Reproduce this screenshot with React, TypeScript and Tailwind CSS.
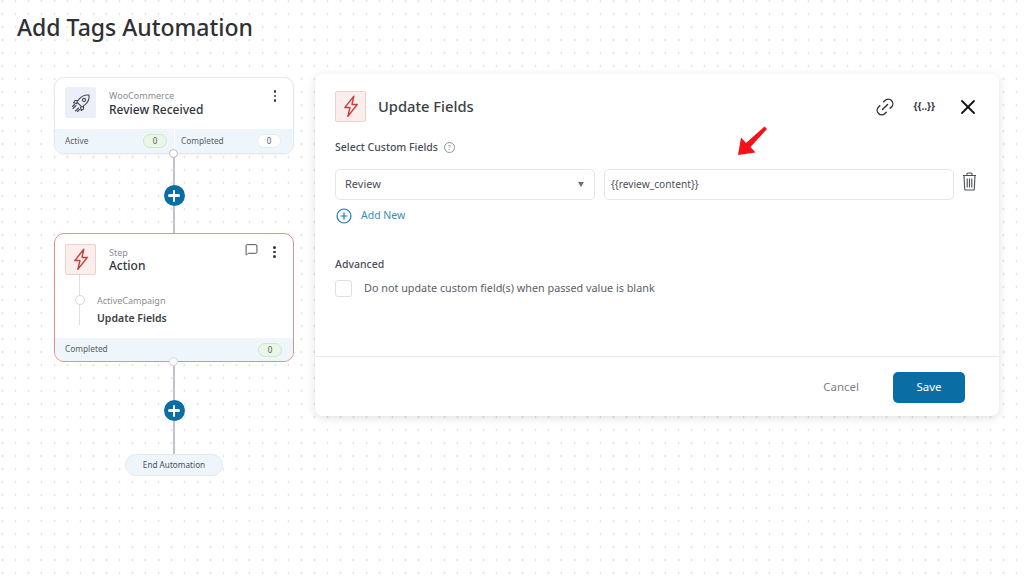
import { Link2, MessageSquare, X } from "lucide-react";

const BoltIcon = ({ size = 18 }: { size?: number }) => (
  <svg width={size} height={size * 1.25} viewBox="0 0 16 20" fill="none" stroke="#c9403c" strokeWidth="1.3" strokeLinejoin="round">
    <path d="M10.5 1 2.5 11.2h4.6L5.2 19l8.3-10.6H8.9L10.5 1Z" />
  </svg>
);

const RocketIcon = () => (
  <svg width="20" height="20" viewBox="0 0 20 20" fill="none" stroke="#4a4a55" strokeWidth="1.1" strokeLinejoin="round" strokeLinecap="round">
    <path d="M18 2c-4-.4-7.2 1-9.4 3.6L5.8 9l5.2 5.2 3.4-2.8C17 9.200 18.400 6 18 2Z" />
    <circle cx="13" cy="7" r="1.6" />
    <path d="M6.800 7.500H4L2.500 9.800l3.300.8M12.500 13.200V16l-2.300 1.500-.8-3.300" />
    <path d="M5 12.500 2 15.500M7.500 15 4.500 18M3.500 11.500 1.500 13.500M8.500 16.500 6.500 18.500" />
  </svg>
);

const Kebab = () => (
  <div className="flex flex-col gap-[2px]">
    <span className="size-[2.5px] rounded-full bg-[#33363d]" />
    <span className="size-[2.5px] rounded-full bg-[#33363d]" />
    <span className="size-[2.5px] rounded-full bg-[#33363d]" />
  </div>
);

const Count = ({ green }: { green?: boolean }) => (
  <span
    className={`flex h-[14px] w-[24px] items-center justify-center rounded-full border text-[8px] text-[#555] ${
      green ? "border-[#cfe8c8] bg-[#eaf7e6]" : "border-[#e6ecf2] bg-white"
    }`}
  >
    0
  </span>
);

const AddButton = () => (
  <div className="relative z-10 flex size-[21px] items-center justify-center rounded-full bg-[#0a6ea5]">
    <span className="absolute h-[2.5px] w-[12px] rounded bg-white" />
    <span className="absolute h-[12px] w-[2.5px] rounded bg-white" />
  </div>
);

export default function App() {
  return (
    <div
      className="relative h-[576px] w-[1024px] overflow-hidden bg-white bg-[radial-gradient(circle,#d6d8dc_0.8px,transparent_1.100px)] bg-[size:13px_13px] bg-[position:-4px_-5.500px] text-[#353a40]"
      style={{ fontFamily: '"Noto Sans", "Open Sans", sans-serif' }}
    >
      <h1 className="h-[74px] pl-[17px] pt-[9px] text-[23px] leading-[36px] font-medium text-[#2f3035]">Add Tags Automation</h1>

      <div className="flex items-start">
        {/* flow column */}
        <div className="ml-[54px] flex w-[240px] flex-col items-center pt-[3px]">
          <div className="relative w-full rounded-[10px] border border-[#e3e9f0] bg-white shadow-[0_1px_3px_rgba(0,0,0,0.05)]">
            <div className="flex h-[51px] items-start pl-[10px] pr-[17px] pt-[9px]">
              <div className="flex size-[31px] items-center justify-center rounded-[2px] bg-[#eceef8]">
                <RocketIcon />
              </div>
              <div className="ml-[13px] flex-1 pt-[3px]">
                <div className="text-[9px] leading-[12px] text-[#8a8d94]">WooCommerce</div>
                <div className="text-[12px] leading-[15px] font-medium text-[#33363b]">Review Received</div>
              </div>
              <div className="pt-[3px]">
                <Kebab />
              </div>
            </div>
            <div className="flex h-[24px] items-center rounded-b-[10px] bg-[#eef5fb] text-[8.300px] text-[#5a5f66]">
              <div className="flex h-full w-[120px] items-center justify-between border-r border-white pl-[10px] pr-[7px]">
                <span>Active</span>
                <Count green />
              </div>
              <div className="flex flex-1 items-center justify-between pl-[6px] pr-[12px]">
                <span>Completed</span>
                <Count />
              </div>
            </div>
            <span className="absolute bottom-[-5px] left-[114px] size-[9px] rounded-full border border-[#b9bcc0] bg-white" />
          </div>

          <div className="h-[31px] w-[1.500px] bg-[#bfc2c6]" />
          <AddButton />
          <div className="h-[27px] w-[1.500px] bg-[#bfc2c6]" />

          <div className="relative w-full rounded-[10px] border border-[#e0918c] bg-white">
            <div className="relative h-[104px] pl-[10px] pt-[10px]">
              <div className="relative z-10 flex size-[31px] items-center justify-center rounded-[2px] border border-[#f0d0cd] bg-[#fbeeec]">
                <BoltIcon />
              </div>
              <div className="absolute left-[23.500px] top-[41px] h-[50px] w-[1.500px] bg-[#dcdfe3]" />
              <span className="absolute left-[19.500px] top-[61px] size-[10px] rounded-full border border-[#d5d8dc] bg-white" />
              <div className="absolute left-[54px] top-[12px]">
                <div className="text-[9px] leading-[13px] text-[#8a8d94]">Step</div>
                <div className="-mt-[1px] text-[12px] leading-[15px] font-medium text-[#33363b]">Action</div>
              </div>
              <div className="absolute left-[42px] top-[60px]">
                <div className="text-[9px] leading-[13px] text-[#8a8d94]">ActiveCampaign</div>
                <div className="mt-[4px] text-[10.500px] leading-[15px] font-semibold text-[#3c3f45]">Update Fields</div>
              </div>
              <MessageSquare className="absolute left-[190px] top-[9px] size-[13px] text-[#33363d]" strokeWidth={1.6} />
              <div className="absolute left-[218px] top-[12px]">
                <Kebab />
              </div>
            </div>
            <div className="flex h-[23px] items-center justify-between rounded-b-[10px] bg-[#eef5fb] pl-[10px] pr-[11px] text-[8.300px] text-[#5a5f66]">
              <span>Completed</span>
              <Count green />
            </div>
            <span className="absolute bottom-[-5px] left-[114px] size-[9px] rounded-full border border-[#d5d8dc] bg-white" />
          </div>

          <div className="h-[38px] w-[1.500px] bg-[#bfc2c6]" />
          <AddButton />
          <div className="h-[33px] w-[1.500px] bg-[#bfc2c6]" />
          <div className="flex h-[22px] w-[98px] items-center justify-center rounded-full border border-[#e3e9f0] bg-[#eef5fb] text-[8.200px] text-[#4c5056]">
            End Automation
          </div>
        </div>

        {/* update fields panel */}
        <div className="ml-[21px] flex h-[342px] w-[684px] flex-col rounded-[8px] bg-white shadow-[0_2px_10px_rgba(0,0,0,0.13)]">
          <div className="flex items-center pl-[20px] pr-[19px] pt-[17px]">
            <div className="flex size-[31px] items-center justify-center rounded-[2px] border border-[#f0d0cd] bg-[#fbeeec]">
              <BoltIcon />
            </div>
            <div className="ml-[12px] flex-1 text-[14.700px] font-medium text-[#3c3f45]">Update Fields</div>
            <Link2 className="size-[22px] -rotate-45 text-[#2f3035]" strokeWidth={1.5} />
            <span className="ml-[18px] text-[10px] font-bold text-[#33363b]">{"{{..}}"}</span>
            <X className="ml-[21px] size-[24px] text-[#111]" strokeWidth={1.8} />
          </div>

          <div className="mt-[18px] flex items-center pl-[20px] text-[10.500px] font-medium text-[#4a4e55]">
            Select Custom Fields
            <span className="ml-[6px] flex size-[11px] items-center justify-center rounded-full border border-[#8f9399] text-[7px] font-normal text-[#8f9399]">?</span>
          </div>

          <div className="mt-[13px] flex items-start pl-[20px]">
            <div className="flex h-[31px] w-[260px] items-center justify-between rounded-[5px] border border-[#e4e6ea] pl-[9px] pr-[10px] text-[11px] text-[#4c5056]">
              Review
              <span className="size-0 border-x-[3.500px] border-t-[5px] border-x-transparent border-t-[#6b6f75]" />
            </div>
            <div className="ml-[9px] flex h-[31px] w-[350px] items-center rounded-[5px] border border-[#e4e6ea] pl-[6px] text-[10.200px] text-[#4c5056]">
              {"{{review_content}}"}
            </div>
            <svg className="ml-[8px] mt-[3px]" width="15" height="19" viewBox="0 0 15 19" fill="none" stroke="#4a4e55" strokeWidth="1.100">
              <path d="M1 3.500h13M5 3.500V2a1 1 0 0 1 1-1h3a1 1 0 0 1 1 1v1.500M2 3.500l.7 13.500a1 1 0 0 0 1 1h7.600a1 1 0 0 0 1-1L13 3.500M5.200 6.500v9M7.500 6.500v9M9.800 6.500v9" />
            </svg>
          </div>

          <div className="mt-[8px] flex items-center pl-[21px] text-[10.500px] text-[#3a8db5]">
            <svg width="16" height="16" viewBox="0 0 16 16" fill="none" stroke="#1f7ba8" strokeWidth="1.200">
              <circle cx="8" cy="8" r="7" />
              <path d="M8 4.500v7M4.500 8h7" />
            </svg>
            <span className="ml-[9px]">Add New</span>
          </div>

          <div className="mt-[33px] pl-[20px] text-[10.500px] font-medium text-[#4a4e55]">Advanced</div>
          <div className="mt-[7px] flex items-center pl-[20px] text-[10.800px] text-[#5c6066]">
            <span className="size-[17px] rounded-[3px] border border-[#dcdfe3] bg-white" />
            <span className="ml-[12px]">Do not update custom field(s) when passed value is blank</span>
          </div>

          <div className="mt-auto flex h-[60px] items-center justify-end border-t border-[#e9ebee] pr-[34px]">
            <span className="text-[11.500px] text-[#7b7f86]">Cancel</span>
            <button className="ml-[34px] mt-[1px] h-[31px] w-[72px] rounded-[5px] bg-[#0a6ea5] text-[11.500px] text-white">Save</button>
          </div>
        </div>
      </div>

      {/* annotation arrow on top of the screenshot */}
      <svg className="absolute left-[736px] top-[125px]" width="32" height="32" viewBox="0 0 32 32">
        <path d="M28.500 1.500 31 4 14.500 22 19.500 27.500 2 30 5 12.500 10 18Z" fill="#f4111a" />
      </svg>
    </div>
  );
}
